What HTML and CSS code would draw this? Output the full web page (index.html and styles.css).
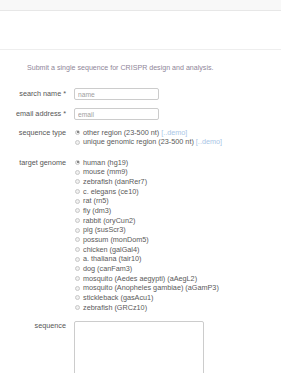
FILE: index.html
```html
<!DOCTYPE html>
<html>
<head>
<meta charset="utf-8">
<link rel="stylesheet" href="styles.css">
</head>
<body>
<div class="navbar"></div>
<div class="titlebar"></div>
<p class="intro">Submit a single sequence for CRISPR design and analysis.</p>
<form class="form">
  <div class="row row-input">
    <label class="lbl">search name *</label>
    <input class="field" type="text" placeholder="name">
  </div>
  <div class="row row-input">
    <label class="lbl">email address *</label>
    <input class="field" type="text" placeholder="email">
  </div>
  <div class="row row-list">
    <span class="lbl">sequence type</span>
    <div class="opts">
      <div class="opt"><span class="radio on"></span>other region (23-500 nt) <span class="demo">[..demo]</span></div>
      <div class="opt"><span class="radio"></span>unique genomic region (23-500 nt) <span class="demo">[..demo]</span></div>
    </div>
  </div>
  <div class="row row-list row-genome">
    <span class="lbl">target genome</span>
    <div class="opts">
      <div class="opt"><span class="radio on"></span>human (hg19)</div>
      <div class="opt"><span class="radio"></span>mouse (mm9)</div>
      <div class="opt"><span class="radio"></span>zebrafish (danRer7)</div>
      <div class="opt"><span class="radio"></span>c. elegans (ce10)</div>
      <div class="opt"><span class="radio"></span>rat (rn5)</div>
      <div class="opt"><span class="radio"></span>fly (dm3)</div>
      <div class="opt"><span class="radio"></span>rabbit (oryCun2)</div>
      <div class="opt"><span class="radio"></span>pig (susScr3)</div>
      <div class="opt"><span class="radio"></span>possum (monDom5)</div>
      <div class="opt"><span class="radio"></span>chicken (galGal4)</div>
      <div class="opt"><span class="radio"></span>a. thaliana (tair10)</div>
      <div class="opt"><span class="radio"></span>dog (canFam3)</div>
      <div class="opt"><span class="radio"></span>mosquito (Aedes aegypti) (aAegL2)</div>
      <div class="opt"><span class="radio"></span>mosquito (Anopheles gambiae) (aGamP3)</div>
      <div class="opt"><span class="radio"></span>stickleback (gasAcu1)</div>
      <div class="opt"><span class="radio"></span>zebrafish (GRCz10)</div>
    </div>
  </div>
  <div class="row row-list row-seq">
    <span class="lbl">sequence</span>
    <textarea class="seq"></textarea>
  </div>
</form>
</body>
</html>
```

FILE: styles.css
```css
html, body {
  margin: 0;
  padding: 0;
  background: #fff;
  font-family: "Liberation Sans", Arial, sans-serif;
  font-size: 7.25px;
  line-height: 9.67px;
  color: #555;
  overflow: hidden;
}
.navbar {
  height: 10px;
  background: #f8f8f8;
  border-bottom: 1px solid #e7e7e7;
}
.titlebar {
  height: 38px;
  border-bottom: 1px solid #eeeeee;
}
.intro {
  margin: 14px 0 0 27px;
  font-size: 7.1px;
  color: #8f8699;
}
.form {
  margin-top: 14.5px;
}
.row {
  display: flex;
  column-gap: 8px;
}
.row-input {
  align-items: center;
  margin-bottom: 8px;
}
.row-list {
  align-items: flex-start;
  margin-bottom: 10.7px;
}
.row-input + .row-list {
  margin-top: -0.6px;
}
.row-genome {
  margin-bottom: 9.1px;
}
.lbl {
  width: 66px;
  flex: none;
  text-align: right;
  color: #555;
}
.field {
  box-sizing: border-box;
  width: 85px;
  height: 12px;
  margin: 0;
  padding: 0 3px;
  border: 1px solid #cccccc;
  border-radius: 2px;
  font-family: inherit;
  font-size: 6.7px;
  color: #555;
  background: #fff;
  outline: none;
}
.field::placeholder {
  color: #a0a0a0;
}
.opts {
  display: flex;
  flex-direction: column;
}
.opt {
  display: flex;
  align-items: center;
  white-space: pre;
  color: #5a5a5a;
}
.radio {
  box-sizing: border-box;
  width: 5px;
  height: 5px;
  margin: 0 3px 0 1px;
  border-radius: 50%;
  border: 1px solid #c8c8c8;
  background: #f0f0f0;
  position: relative;
  flex: none;
}
.radio.on::after {
  content: "";
  position: absolute;
  left: 0.5px;
  top: 0.5px;
  width: 2px;
  height: 2px;
  border-radius: 50%;
  background: #666;
}
.demo {
  color: #a9c6e6;
}
.seq {
  box-sizing: border-box;
  width: 130px;
  height: 80px;
  margin: 0;
  padding: 0;
  border: 1px solid #cccccc;
  border-radius: 2px;
  resize: none;
  background: #fff;
}
```
